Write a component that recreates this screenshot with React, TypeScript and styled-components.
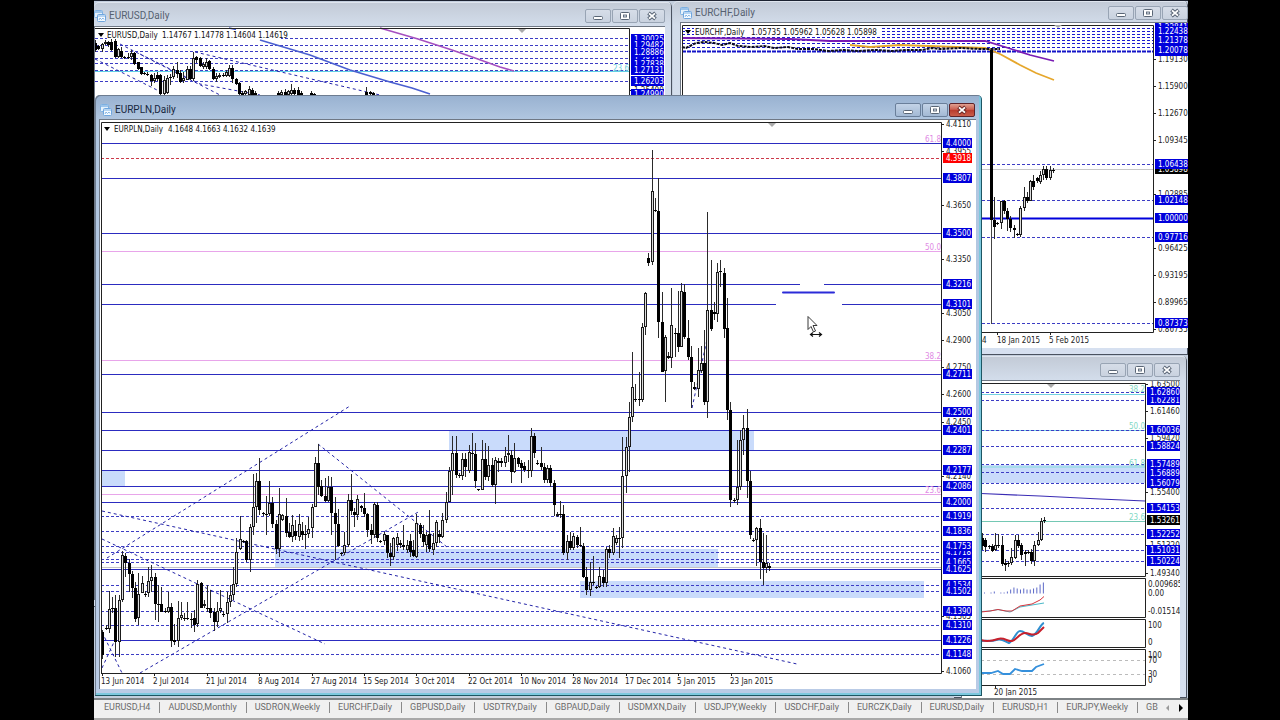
import React from "react";
import styled, { createGlobalStyle } from "styled-components";

const UI_FONT = `Roboto, "Noto Sans", sans-serif`;
const CHART_FONT = `"DejaVu Sans Condensed", "DejaVu Sans", sans-serif`;
const BLUE = "#0000dc";
const LINE = "#2c2cc0";
const DASH = "#3c3cc4";
const ZONE = "#c9dbfb";

const GlobalStyle = createGlobalStyle`
  * { box-sizing: border-box; }
  body { margin: 0; background: #000; font-family: ${UI_FONT}; }
`;

const Page = styled.div`
  display: flex;
  flex-direction: column;
  min-height: 100vh;
  padding: 0 92px 0 94px;
  background: #000;
`;

const Workspace = styled.main`
  position: relative;
  flex: 1;
  overflow: hidden;
  background: #c3cedd;
  border-top: 1px solid #1c2230;
`;

type FrameProps = {
  $left?: number;
  $right?: number;
  $top: number;
  $width?: number;
  $height: number;
  $active?: boolean;
  $inset: string;
};

const Frame = styled.section<FrameProps>`
  position: absolute;
  top: ${(p) => p.$top}px;
  ${(p) => (p.$left !== undefined ? `left: ${p.$left}px;` : "")}
  ${(p) => (p.$right !== undefined ? `right: ${p.$right}px;` : "")}
  ${(p) => (p.$width !== undefined ? `width: ${p.$width}px;` : "")}
  height: ${(p) => p.$height}px;
  padding: ${(p) => p.$inset};
  display: flex;
  flex-direction: column;
  border-radius: 5px 5px 0 0;
  background: ${(p) =>
    p.$active
      ? "linear-gradient(#98b1d0, #b0c6e0 24px, #b9cbe6)"
      : "linear-gradient(#c2cad6, #d3ddeb 24px, #d6e0f0)"};
  box-shadow: ${(p) =>
    p.$active
      ? "inset -1px -1px 0 #1d5663, inset 1px 1px 0 #6d7c90, inset -3px -3px 0 #7cc8de"
      : "inset -1px -1px 0 #4a5260, inset 0 1px 0 #dfe5ee"};
`;

const TitleBar = styled.header<{ $height: number; $drop: number; $side: number }>`
  display: flex;
  align-items: center;
  flex: none;
  gap: 3px;
  height: ${(p) => p.$height}px;
  padding: ${(p) => p.$drop}px ${(p) => p.$side}px 0;
`;

const Title = styled.h2<{ $active?: boolean }>`
  flex: 1;
  margin: 0;
  font-size: 10px;
  line-height: 14px;
  font-weight: 400;
  color: ${(p) => (p.$active ? "#18283e" : "#566170")};
`;

const Controls = styled.div`
  display: flex;
  gap: 1px;
`;

const ControlButton = styled.button<{ $active?: boolean; $danger?: boolean }>`
  display: flex;
  align-items: center;
  justify-content: center;
  width: 26px;
  height: 14px;
  padding: 0;
  border: 1px solid ${(p) => (p.$danger ? "#5e2329" : p.$active ? "#6a7f9a" : "#98a4b4")};
  border-radius: 2px;
  background: ${(p) =>
    p.$danger
      ? "linear-gradient(#e0a090, #cb6152 45%, #b83a2c 50%, #c95d4a)"
      : p.$active
        ? "linear-gradient(#c3d3e7, #a3b9d4)"
        : "linear-gradient(#d6dde8, #c9d2df)"};
`;

const Body = styled.div`
  display: flex;
  flex: 1;
  justify-content: flex-end;
  overflow: hidden;
  background: #fff;
  border-top: 1px solid #6f7885;
  border-left: 1px solid #6f7885;
`;

const Chart = styled.svg`
  display: block;
  flex: none;
  font-family: ${CHART_FONT};
  font-size: 8px;
`;

const TabBar = styled.nav`
  display: flex;
  align-items: center;
  flex: none;
  height: 22px;
  padding-bottom: 3px;
  overflow: hidden;
  background: #f0f0f0;
  border-top: 2px solid #7d8285;
  border-bottom: 2px solid #a9a9a9;
`;

const Tabs = styled.div`
  display: flex;
  flex: 1;
  min-width: 0;
  overflow: hidden;
`;

const Tab = styled.button`
  flex: none;
  padding: 0 9px 0 8px;
  border: 0;
  border-right: 1px solid #8a8a8a;
  background: none;
  font-family: ${UI_FONT};
  font-size: 9px;
  line-height: 11px;
  color: #6c6c6c;
  white-space: nowrap;
  &:first-child { padding-left: 10px; }
  &:last-child { border-right: 0; padding-right: 0; }
`;

const Scrollers = styled.div`
  display: flex;
  flex: none;
`;

const ScrollButton = styled.button<{ $dim?: boolean }>`
  display: flex;
  width: 14px;
  height: 12px;
  padding: 0;
  align-items: center;
  justify-content: center;
  border: 0;
  background: none;
  color: ${(p) => (p.$dim ? "#9a9a9a" : "#000")};
`;

function WindowIcon() {
  return (
    <svg width="12" height="12" viewBox="0 0 12 12" aria-hidden="true">
      <rect x="0.5" y="0.5" width="8" height="7" rx="1" fill="#e6f2fc" stroke="#7db0e2" />
      <path d="M1 2h7" stroke="#7db0e2" strokeWidth="1.4" />
      <rect x="3.5" y="4.5" width="8" height="7" rx="1" fill="#f4faff" stroke="#6fa6de" />
      <path d="M4 6h7" stroke="#8abbea" strokeWidth="1.2" />
      <path d="M5 10l1-2 1.5 1.5L9 8l1 1.5" fill="none" stroke="#6fa6de" strokeWidth="0.8" />
    </svg>
  );
}

function WindowControls({ active }: { active?: boolean }) {
  const ink = "#5a6676";
  return (
    <Controls>
      <ControlButton $active={active} aria-label="Minimize">
        <svg width="10" height="10" viewBox="0 0 10 10">
          <rect x="0.5" y="5.5" width="9" height="3" rx="1" fill="#fff" stroke={ink} />
        </svg>
      </ControlButton>
      <ControlButton $active={active} aria-label="Maximize">
        <svg width="10" height="10" viewBox="0 0 10 10">
          <rect x="0.5" y="1.5" width="9" height="7" rx="1" fill="#fff" stroke={ink} />
          <rect x="3.5" y="4" width="3" height="2" fill="#dfe6f0" stroke={ink} strokeWidth="0.9" />
        </svg>
      </ControlButton>
      <ControlButton $active={active} $danger={active} aria-label="Close">
        <svg width="10" height="10" viewBox="0 0 10 10">
          <path d="M1.500 2l7 6M8.500 2l-7 6" stroke={active ? "#6e2a26" : ink} strokeWidth="3.8" />
          <path d="M2 2.400l6 5.200M8 2.400l-6 5.200" stroke="#fff" strokeWidth="1.9" />
        </svg>
      </ControlButton>
    </Controls>
  );
}

/* Candle: x, high, low, open, close in chart coordinates */
type Candle = [number, number, number, number, number];

function Candles({ data }: { data: Candle[] }) {
  return (
    <g>
      {data.map(([rawX, h, l, o, c], i) => {
        const x = Math.floor(rawX) + 0.5;
        const top = Math.min(o, c);
        const size = Math.abs(c - o);
        return (
          <g key={i}>
            <path d={`M${x} ${h}V${l}`} stroke="#2a2a2a" />
            {c < o && size > 1 ? (
              <rect x={x - 1} y={top + 0.5} width="2" height={size - 1} fill="#ddd" stroke="#1a1a1a" />
            ) : (
              <rect x={x - 1.5} y={top} width="3" height={Math.max(size, 1)} fill="#000" />
            )}
          </g>
        );
      })}
    </g>
  );
}

type LevelsProps = { ys: number[]; x1: number; x2: number; dashed?: boolean; color?: string };

function Levels({ ys, x1, x2, dashed, color }: LevelsProps) {
  return (
    <path
      d={ys.map((y) => `M${x1} ${y + 0.5}H${x2}`).join("")}
      stroke={color ?? (dashed ? DASH : LINE)}
      strokeWidth="1"
      strokeDasharray={dashed ? "3 2" : undefined}
    />
  );
}

type Label = [string, number, string?];

function PlainLabels({ x, items, tick = true }: { x: number; items: Label[]; tick?: boolean }) {
  return (
    <g fill="#222">
      {items.map(([t, y]) => (
        <React.Fragment key={t + y}>
          {tick && <path d={`M${x - 4} ${y + 0.5}h2`} stroke="#222" />}
          <text x={x} y={y + 3}>{t}</text>
        </React.Fragment>
      ))}
    </g>
  );
}

function PriceTags({ x, width, items }: { x: number; width: number; items: Label[] }) {
  return (
    <g>
      {items.map(([t, y, color]) => (
        <g key={t}>
          <rect x={x} y={y - 5} width={width} height="10" fill={color ?? BLUE} />
          <text x={x + 3} y={y + 3} fill="#fff">{t}</text>
        </g>
      ))}
    </g>
  );
}

const priceY = (p: number) => Math.floor(143.5 + (4.4 - p) * 1793);

const PLN_SOLID = [4.4, 4.3807, 4.35, 4.2711, 4.25, 4.2401, 4.2287, 4.2177, 4.2086, 4.2, 4.1625, 4.1226];
const PLN_DASHED = [4.1919, 4.1836, 4.1753, 4.1718, 4.1678, 4.1665, 4.1534, 4.1502, 4.139, 4.131, 4.1148];
const PLN_TAGS = [
  4.4, 4.3807, 4.35, 4.3216, 4.3101, 4.2711, 4.25, 4.2401, 4.2287, 4.2177, 4.2086, 4.2, 4.1919, 4.1836,
  4.1718, 4.1753, 4.1665, 4.1625, 4.1534, 4.1502, 4.139, 4.131, 4.1226, 4.1148,
];

/* high low open close, one candle per trading day */
const PLN_SERIES = `630 659 632 655|625 630 628 629|591 633 629 609|597 613 609 608|595 657 608 642|595 657 642 600|551 602 600 555|553 577 556 563|559 592 563 574|571 598 574 588|582 622 588 619|573 625 618 594|576 593 593 583|591 597 595 594|567 597 593 581|565 592 581 577|573 620 577 604|585 622 604 605|587 612 604 612|608 613 612 611|592 613 612 607|603 647 607 641|624 645 640 642|601 647 641 618|602 620 618 615|613 621 618 619|602 620 618 619|613 628 619 620|610 632 618 625|580 627 624 584|582 608 583 608|600 608 606 604|585 612 608 609|590 618 608 613|608 631 612 622|602 627 622 611|590 613 611 608|611 617 614 615|592 623 614 602|585 607 602 595|567 600 595 584|538 587 584 552|516 550 549 539|540 543 541 542|540 562 541 560|524 572 560 527|474 535 527 507|473 523 507 481|458 515 481 510|512 516 513 514|496 535 514 515|481 516 514 503|497 528 503 524|520 554 524 549|488 557 549 514|514 521 520 515|498 537 516 533|523 538 532 537|515 542 537 525|520 540 531 536|514 541 537 524|522 540 531 535|525 549 534 535|517 538 534 529|504 538 528 507|457 507 507 463|444 495 463 487|480 497 486 496|478 502 496 501|476 502 501 487|477 535 487 513|497 560 513 524|509 547 524 546|552 556 553 554|532 555 553 545|494 547 545 500|474 515 500 511|508 527 512 515|495 520 515 499|505 512 506 508|493 517 508 514|513 537 514 530|524 544 530 535|502 538 535 504|502 542 505 538|540 543 541 542|532 545 541 534|535 558 535 553|543 566 553 557|537 560 557 538|533 551 545 537|540 548 543 545|525 550 545 547|540 553 550 545|534 557 541 552|540 557 550 556|514 558 557 523|523 538 525 534|525 547 534 542|532 552 545 535|510 552 534 549|533 555 550 543|520 547 543 522|530 543 534 537|513 538 537 520|492 523 520 502|467 502 502 471|436 495 471 453|436 478 453 475|473 478 475 476|453 480 476 459|453 477 459 467|445 473 471 452|433 470 453 454|443 488 454 481|489 491 489 490|440 490 490 459|443 480 459 477|446 481 477 465|458 487 465 485|457 504 485 460|458 472 461 463|458 467 461 463|447 467 463 456|435 462 455 453|450 483 455 472|443 473 472 458|457 467 458 464|460 483 463 468|462 472 466 470|460 478 470 471|428 477 471 436|433 458 436 453|460 465 463 464|447 470 463 467|463 483 467 480|465 483 480 468|465 487 468 483|480 516 483 505|512 517 516 514|501 518 514 515|505 555 514 553|535 560 553 541|532 550 541 548|533 550 548 536|535 548 537 545|527 547 545 546|543 578 546 577|567 595 577 590|562 596 590 582|556 585 582 583|586 589 588 587|567 588 587 576|570 587 577 583|547 587 583 549|545 558 549 553|528 555 553 536|535 545 543 538|527 558 538 539|437 548 538 476|437 493 476 447|402 472 447 417|352 422 417 387|384 402 399 400|372 406 399 400|323 402 400 327|292 335 327 293|253 266 258 263|150 265 262 191|198 212 210 211|178 338 211 322|292 372 322 372|335 402 371 337|352 359 356 358|288 368 358 325|328 357 333 334|291 352 333 347|283 347 347 291|284 339 292 337|320 360 338 357|346 408 357 382|382 390 387 389|348 397 389 370|346 373 371 363|330 405 363 402|212 418 402 310|260 331 310 329|302 320 312 314|263 322 314 272|260 287 271 272|268 338 273 329|298 420 328 410|402 507 410 500|498 503 500 501|440 505 500 487|430 490 487 440|415 455 440 428|409 498 428 481|471 539 481 535|538 542 540 541|527 566 540 528|519 579 528 562|533 585 562 568|535 573 568 563|563 571 566 568`;

const PLN_CANDLES: Candle[] = PLN_SERIES.split("|").map((row, i) => {
  const [h, l, o, c] = row.split(" ").map(Number);
  return [102.9 + i * 3.27, h, l, o, c];
});

const fromColumns = (start: number, series: string): Candle[] =>
  series.split("|").map((row) => {
    const [n, h, l, o, c] = row.split(" ").map(Number);
    return [start + n * 3.27, h, l, o, c];
  });

const USD_CANDLES = fromColumns(
  95.5,
  "0 40 52 43 50|1 45 50 46 49|2 43 52 49 44|3 40 45 44 42|4 41 47 42 45|5 39 51 42 50|6 39 58 41 57|7 48 58 57 49|8 47 58 51 57|9 56 59 57 58|10 53 59 57 58|11 50 60 57 53|12 52 65 53 64|13 62 70 62 69|14 67 75 67 74|15 72 75 73 74|16 72 76 74 75|17 74 86 75 81|18 73 83 81 78|19 72 81 75 79|20 74 95 75 94|21 76 96 94 80|22 75 94 93 78|23 74 85 77 78|24 66 79 77 69|25 62 78 70 74|26 70 83 73 82|27 72 83 81 78|28 66 80 80 69|29 66 80 69 79|30 52 81 79 58|31 56 63 57 60|32 57 67 58 66|33 62 69 67 64|34 58 69 67 62|35 60 70 61 69|36 67 80 69 79|37 73 82 79 76|38 73 78 77 75|39 73 77 75 76|40 70 77 76 72|41 65 77 76 68|42 65 83 68 79|43 78 85 79 84|44 82 95 83 94|45 91 96 93 95|46 90 96 94 91|47 86 96 95 89|48 88 96 90 95|49 91 96 93 95|56 91 96 93 95|57 90 96 95 92|58 89 96 92 95|59 90 96 95 91|60 84 96 94 90|61 88 96 90 94|62 87 96 90 95|63 91 96 93 95|66 91 96 93 95|67 93 96 94 95|83 87 96 92 95|84 91 96 92 94|85 92 96 93 95",
);

const CHF_CANDLES = fromColumns(
  991.3,
  "1 197 239 220 227|2 222 225 223 224|3 201 229 223 201|4 200 214 201 211|5 208 231 211 219|6 216 232 219 228|7 225 238 228 230|8 233 236 234 235|9 206 237 235 208|10 187 211 208 197|11 192 203 197 201|12 180 201 201 181|13 175 190 181 187|14 177 183 178 181|15 171 184 182 175|16 166 180 175 169|17 166 180 169 178|18 166 180 178 170|19 168 173 170 171",
);

const GBP_CANDLES = fromColumns(
  982.5,
  "0 533 550 538 546|1 538 552 540 547|2 545 549 546 547|3 544 552 546 551|4 533 551 550 545|5 534 548 545 546|6 536 566 545 564|7 559 571 563 565|8 561 567 563 564|9 548 565 563 557|10 535 559 558 540|11 535 548 540 546|12 543 560 545 555|13 550 566 552 554|14 550 554 552 553|15 549 564 552 561|16 541 566 561 545|17 532 546 545 540|18 518 541 540 521|19 517 523 520 521",
);

/* The exchange rate sat just above its floor for months: a flat noisy run */
const CHF_FLOOR = "M682 47l4 1 4-2 6-3 8-1 10 1 8 2 8-2 8 3 14 1 12-1 10 2 14-1 10 2 16 0 14 2 16-1 14 1 18-1 16 1 14-1 16 0 10-2 8 1 20-1 20 1 20 0H990";

function EurPlnChart() {
  const dates: [string, number][] = [
    ["13 Jun 2014", 101], ["2 Jul 2014", 153], ["21 Jul 2014", 206], ["8 Aug 2014", 258], ["27 Aug 2014", 311],
    ["15 Sep 2014", 363], ["3 Oct 2014", 415], ["22 Oct 2014", 468], ["10 Nov 2014", 520], ["28 Nov 2014", 572],
    ["17 Dec 2014", 625], ["5 Jan 2015", 677], ["23 Jan 2015", 730],
  ];
  return (
    <Chart width="876" height="569" viewBox="100 120 876 569" role="img" aria-label="EURPLN daily chart">
      <g fill={ZONE}>
        <rect x="101" y="470" width="24" height="17" />
        <rect x="449" y="430" width="305" height="20" />
        <rect x="275" y="549" width="443" height="19" />
        <rect x="580" y="581" width="344" height="17" />
      </g>
      <Levels ys={[251, 360, 494]} x1={101} x2={941} color="#e8a5ea" />
      <Levels ys={[567]} x1={101} x2={941} color="#c4c4c4" />
      <Levels ys={PLN_SOLID.map(priceY)} x1={101} x2={941} />
      <Levels ys={PLN_DASHED.map(priceY)} x1={101} x2={941} dashed />
      <Levels ys={[158]} x1={101} x2={941} dashed color="#cc3a4a" />
      <path d="M101 284.500H800M824 284.500H941M101 304.500H776M842 304.500H941" stroke={LINE} />
      <path d="M783 292.500H834" stroke="#2b2bd8" strokeWidth="2" strokeLinecap="round" />
      <path
        d="M107 558L350 406M140 673L420 511M102 511L797 664M102 539L325 644M318 444L447 547M102 632L122 673M102 668L114 642M692 408L708 335"
        stroke="#2424a8"
        strokeDasharray="3 3"
      />
      <Candles data={PLN_CANDLES} />
      <g fill="#e08ae4" textAnchor="end">
        <text x="941" y="142">61.8</text>
        <text x="941" y="250">50.0</text>
        <text x="941" y="359">38.2</text>
        <text x="941" y="493">23.6</text>
      </g>
      <path d="M101.500 673V122.500H941.500V673.500H101" fill="none" stroke="#222" />
      <path d={dates.map(([, x]) => `M${x + 1.5} 673v3`).join("")} stroke="#222" />
      <path d="M768 123h8l-4 4z" fill="#aaa" />
      <path d="M104 127h6l-3 4z" fill="#000" />
      <text x="114" y="132" fill="#111">EURPLN,Daily</text>
      <text x="168" y="132" fill="#111">4.1648 4.1663 4.1632 4.1639</text>
      {dates.map(([t, x]) => <text key={t} x={x} y="684" fill="#222">{t}</text>)}
      <PlainLabels
        x={946}
        items={[["4.4110", 124], ["4.3955", 151], ["4.3650", 205], ["4.3350", 259], ["4.3050", 313], ["4.2900", 340], ["4.2750", 367], ["4.2600", 394], ["4.2450", 422], ["4.2140", 476], ["4.1365", 616], ["4.1060", 671]]}
      />
      <PriceTags x={943} width={29} items={[...PLN_TAGS.map((p): Label => [p.toFixed(4), priceY(p)]), ["4.3918", 158, "#f00"]]} />
      <path d="M808 316.500v13l3-3 2.500 5.500 2-1-2.500-5.500h4z" fill="#fff" stroke="#222" strokeWidth="0.9" />
      <path d="M811 334.500h10M813 332.500l-2.500 2 2.500 2M819 332.500l2.500 2-2.500 2" fill="none" stroke="#111" strokeWidth="1.2" />
    </Chart>
  );
}

function EurUsdChart() {
  return (
    <Chart width="570" height="70" viewBox="95 27 570 70" role="img" aria-label="EURUSD daily chart">
      <Levels ys={[71]} x1={95} x2={630} color="#62cfe6" />
      <Levels ys={[38, 45, 51, 58, 63, 70, 81]} x1={95} x2={630} dashed />
      <path d="M95 59L165 94M120 44L220 95M140 54L200 84L260 95M195 52L380 95" fill="none" stroke="#2424a8" strokeDasharray="3 3" />
      <path d="M380 28L418 39L452 50L475 58L500 67L514 71" fill="none" stroke="#a54fc0" strokeWidth="1.6" />
      <path d="M229 28L236 29.500M260 40L310 55L350 70L390 82L412 88L430 94" fill="none" stroke="#4a5fd0" strokeWidth="1.6" />
      <Candles data={USD_CANDLES} />
      <path d="M95 28.500H629.500V96" fill="none" stroke="#222" />
      <rect x="107" y="30" width="174" height="9" fill="#fff" />
      <path d="M98 33h6l-3 4z" fill="#000" />
      <path d="M518 29h8l-4 4z" fill="#aaa" />
      <text x="107" y="38" fill="#111">EURUSD,Daily</text>
      <text x="162" y="38" fill="#111">1.14767 1.14778 1.14604 1.14619</text>
      <text x="629" y="71" textAnchor="end" fill="#6fd0d8">23.6</text>
      <PlainLabels x={634} items={[["1.25400", 90]]} />
      <PriceTags x={631} width={33} items={[["1.30025", 39], ["1.29482", 45], ["1.28275", 59], ["1.27838", 64], ["1.28886", 52], ["1.27131", 70], ["1.26203", 81], ["1.24990", 94]]} />
    </Chart>
  );
}

function EurChfChart() {
  return (
    <Chart width="507" height="324" viewBox="681 23 507 324" role="img" aria-label="EURCHF daily chart">
      <Levels ys={[28, 31, 34, 37, 40, 43, 47, 51]} x1={682} x2={1153} dashed color="#1a1ad0" />
      <Levels ys={[164, 200, 237, 323]} x1={682} x2={1153} dashed />
      <path d="M682 51.500H1153" stroke="#1414c8" strokeWidth="2" strokeDasharray="4 1" />
      <path d="M682 218.500H1153" stroke={BLUE} strokeWidth="2" />
      <Levels ys={[169]} x1={682} x2={1153} color="#c8c8c8" />
      <path d="M682 38L790 39L830 41H985L1005 47L1030 55L1054 61" fill="none" stroke="#7a1bb4" strokeWidth="1.8" />
      <path d="M850 45L870 47L900 45L985 48L1000 54L1020 65L1036 73L1054 80" fill="none" stroke="#e6a72c" strokeWidth="1.8" />
      <path d={CHF_FLOOR} fill="none" stroke="#0c0c1c" strokeWidth="2" strokeDasharray="3 1" />
      <path d="M991.500 50V324" stroke="#444" />
      <path d="M991.500 50V220" stroke="#000" strokeWidth="3" />
      <Candles data={CHF_CANDLES} />
      <path d="M682.500 332V25.500H1153.500V332.500H682" fill="none" stroke="#222" />
      <path d="M997.500 332v3M1050.500 332v3" stroke="#222" />
      <rect x="694" y="27" width="186" height="9" fill="#fff" />
      <path d="M685 30h6l-3 4z" fill="#000" />
      <path d="M1054 25h8l-4 3z" fill="#aaa" />
      <text x="695" y="35" fill="#111">EURCHF,Daily</text>
      <text x="751" y="35" fill="#111">1.05735 1.05962 1.05628 1.05898</text>
      <text x="982" y="343" fill="#222">4</text>
      <text x="997" y="343" fill="#222">18 Jan 2015</text>
      <text x="1049" y="343" fill="#222">5 Feb 2015</text>
      <PlainLabels
        x={1158}
        items={[["1.19130", 59], ["1.15900", 86], ["1.12670", 113], ["1.09345", 140], ["1.02885", 194], ["0.96425", 248], ["0.93195", 275], ["0.89965", 302], ["0.86735", 329]]}
      />
      <rect x="1155" y="24" width="33" height="32" fill={BLUE} />
      <PriceTags
        x={1155}
        width={33}
        items={[["1.22841", 27], ["1.21378", 40], ["1.22438", 31], ["1.20078", 50], ["1.05898", 169, "#000"], ["1.06438", 164], ["1.02148", 200], ["1.00000", 218], ["0.97716", 237], ["0.87373", 323]]}
      />
    </Chart>
  );
}

function GbpUsdChart() {
  const bars = [1, 0, 1, 2, 0, 1, 1, 2, 4, 6, 5, 4, 5, 4, 4, 5, 6, 9, 11];
  return (
    <Chart width="199" height="315" viewBox="981 381 199 315" role="img" aria-label="Indicator chart">
      <rect x="981" y="465" width="164" height="18" fill={ZONE} />
      <rect x="981" y="466" width="164" height="2" fill="#a6dcea" />
      <Levels ys={[394, 430]} x1={981} x2={1145} color="#74d2e0" />
      <Levels ys={[521]} x1={981} x2={1145} color="#74c8b4" />
      <Levels ys={[392, 400, 430, 446, 464, 472, 483, 508, 534, 550, 561]} x1={981} x2={1145} dashed />
      <path d="M981 493.500L1040 496L1100 499L1145 501" fill="none" stroke="#3a2cb4" strokeWidth="1.2" />
      <Candles data={GBP_CANDLES} />
      <g fill="#7fd8c4" textAnchor="end">
        <text x="1145" y="392">38.2</text>
        <text x="1145" y="429">50.0</text>
        <text x="1145" y="466">61.8</text>
        <text x="1145" y="520">23.6</text>
      </g>
      <path d={bars.map((b, i) => `M${984.5 + i * 3.27} 593.500v${-b}`).join("")} stroke="#5d6ac8" />
      <path d="M981 611.500L990 611L998 609.500L1010 612L1020 607L1032 605L1044 603" fill="none" stroke="#4ab8c8" />
      <path d="M981 612L990 611L998 609.500L1006 611L1012 611L1020 606L1032 604L1040 600L1044 596.500" fill="none" stroke="#d8343c" />
      <path d="M981 641C987 640 990 642 996 640S1004 641 1009 643C1014 641 1016 631 1020 631S1027 635 1032 636C1038 634 1040 624 1044 623" fill="none" stroke="#2f8fd0" strokeWidth="2" />
      <path d="M981 640C987 642 992 641 998 639S1008 642 1012 641S1020 633 1025 633S1033 637 1038 633L1044 627" fill="none" stroke="#c8202c" strokeWidth="2" />
      <path d="M981 660.500H1145M981 674.500H1145" stroke="#bbb" strokeDasharray="3 3" />
      <path d="M981 673L991 673L998 671L1003 674L1010 674L1015 669L1022 671L1032 671L1036 667L1044 664" fill="none" stroke="#3590dc" strokeWidth="1.8" />
      <path d="M981 383.500H1145.500V576.500H981M981 578.500H1145.500V617.500H981M981 619.500H1145.500V647.500H981M981 649.500H1145.500V685.500H981M995.500 685v3" fill="none" stroke="#222" />
      <path d="M1047 384h8l-4 4z" fill="#aaa" />
      <text x="994" y="695" fill="#222">20 Jan 2015</text>
      <PlainLabels x={1150} items={[["1.63500", 384], ["1.61460", 411], ["1.59420", 438], ["1.55400", 492], ["1.51320", 545], ["1.49340", 573]]} />
      <PlainLabels
        x={1148}
        tick={false}
        items={[["0.009685", 584], ["0.00", 593], ["-0.015146", 611], ["100", 625], ["0", 642], ["100", 655], ["70", 660], ["30", 674], ["0", 680]]}
      />
      <PriceTags
        x={1147}
        width={33}
        items={[["1.62281", 400], ["1.62860", 392], ["1.60036", 430], ["1.58824", 446], ["1.57489", 464], ["1.56889", 473], ["1.56079", 483], ["1.54153", 508], ["1.53261", 520, "#000"], ["1.52252", 534], ["1.51031", 550], ["1.50224", 561]]}
      />
    </Chart>
  );
}

type WindowProps = Omit<FrameProps, "$inset"> & {
  title?: string;
  inset: string;
  barHeight: number;
  barDrop?: number;
  barSide?: number;
  children: React.ReactNode;
};

function ChartWindow({ title, inset, barHeight, barDrop = 2, barSide = 0, children, ...frame }: WindowProps) {
  return (
    <Frame {...frame} $inset={inset}>
      <TitleBar $height={barHeight} $drop={barDrop} $side={barSide}>
        {title && <WindowIcon />}
        <Title $active={frame.$active}>{title}</Title>
        <WindowControls active={frame.$active} />
      </TitleBar>
      <Body>{children}</Body>
    </Frame>
  );
}

const TAB_NAMES = [
  "EURUSD,H4", "AUDUSD,Monthly", "USDRON,Weekly", "EURCHF,Daily", "GBPUSD,Daily", "USDTRY,Daily", "GBPAUD,Daily",
  "USDMXN,Daily", "USDJPY,Weekly", "USDCHF,Daily", "EURCZK,Daily", "EURUSD,Daily", "EURUSD,H1", "EURJPY,Weekly", "GB",
];

export default function App() {
  return (
    <Page>
      <GlobalStyle />
      <Workspace>
        <ChartWindow title="EURUSD,Daily" $left={0} $top={1} $width={578} $height={605} inset="0 7px 7px 0" barHeight={24} barDrop={3}>
          <EurUsdChart />
        </ChartWindow>
        <ChartWindow title="EURCHF,Daily" $left={579} $right={0} $top={0} $height={354} inset="0 0 7px 7px" barHeight={21}>
          <EurChfChart />
        </ChartWindow>
        <ChartWindow $left={860} $right={1} $top={355} $height={342} inset="0 7px 0 7px" barHeight={24} barDrop={4}>
          <GbpUsdChart />
        </ChartWindow>
        <ChartWindow title="EURPLN,Daily" $active $left={1} $top={94} $width={887} $height={601} inset="0 6px 7px 4px" barHeight={24} barDrop={5} barSide={1}>
          <EurPlnChart />
        </ChartWindow>
      </Workspace>
      <TabBar aria-label="Open charts">
        <Tabs>
          {TAB_NAMES.map((name) => <Tab key={name}>{name}</Tab>)}
        </Tabs>
        <Scrollers>
          <ScrollButton $dim aria-label="Scroll tabs left">
            <svg width="4" height="8" viewBox="0 0 4 8"><path d="M4 1v6L1 4z" fill="currentColor" /></svg>
          </ScrollButton>
          <ScrollButton aria-label="Scroll tabs right">
            <svg width="4" height="8" viewBox="0 0 4 8"><path d="M0 0v8l4-4z" fill="currentColor" /></svg>
          </ScrollButton>
        </Scrollers>
      </TabBar>
    </Page>
  );
}
